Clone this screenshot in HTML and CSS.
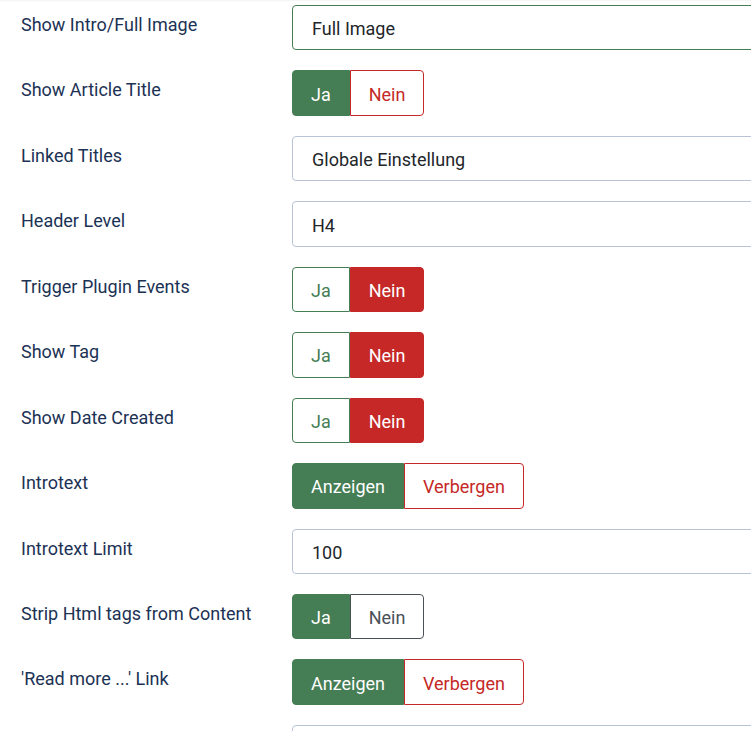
FILE: index.html
```html
<!DOCTYPE html>
<html lang="de">
<head>
  <meta charset="UTF-8">
  <meta name="viewport" content="width=device-width, initial-scale=1.0">
  <title>Article Options</title>
  <link rel="stylesheet" href="styles.css">
</head>
<body>
  <div class="options">
    <div class="row">
      <label class="label">Show Intro/Full Image</label>
      <div class="field valid">Full Image</div>
    </div>
    <div class="row">
      <label class="label">Show Article Title</label>
      <div class="switch">
        <span class="opt on-green">Ja</span>
        <span class="opt off-red">Nein</span>
      </div>
    </div>
    <div class="row">
      <label class="label">Linked Titles</label>
      <div class="field">Globale Einstellung</div>
    </div>
    <div class="row">
      <label class="label">Header Level</label>
      <div class="field">H4</div>
    </div>
    <div class="row">
      <label class="label">Trigger Plugin Events</label>
      <div class="switch">
        <span class="opt off-green">Ja</span>
        <span class="opt on-red">Nein</span>
      </div>
    </div>
    <div class="row">
      <label class="label">Show Tag</label>
      <div class="switch">
        <span class="opt off-green">Ja</span>
        <span class="opt on-red">Nein</span>
      </div>
    </div>
    <div class="row">
      <label class="label">Show Date Created</label>
      <div class="switch">
        <span class="opt off-green">Ja</span>
        <span class="opt on-red">Nein</span>
      </div>
    </div>
    <div class="row">
      <label class="label">Introtext</label>
      <div class="switch">
        <span class="opt on-green">Anzeigen</span>
        <span class="opt off-red">Verbergen</span>
      </div>
    </div>
    <div class="row">
      <label class="label">Introtext Limit</label>
      <div class="field">100</div>
    </div>
    <div class="row">
      <label class="label">Strip Html tags from Content</label>
      <div class="switch">
        <span class="opt on-green">Ja</span>
        <span class="opt off-gray">Nein</span>
      </div>
    </div>
    <div class="row">
      <label class="label">'Read more ...' Link</label>
      <div class="switch">
        <span class="opt on-green">Anzeigen</span>
        <span class="opt off-red">Verbergen</span>
      </div>
    </div>
    <div class="row">
      <label class="label"></label>
      <div class="field"></div>
    </div>
  </div>
</body>
</html>
```

FILE: styles.css
```css
/* Page */
body {
  margin: 0;
  background-color: #fff;
  font-family: Roboto, "Liberation Sans", sans-serif;
  font-size: 18px;
  overflow: hidden;
  box-shadow: inset 0 2px 2px -1px rgba(0, 0, 0, 0.05);
  height: 731px;
}
.options {
  display: flex;
  flex-direction: column;
  gap: 20px;
  padding-top: 5px;
}
.row {
  display: flex;
  align-items: flex-start;
}
.label {
  width: 271px;
  flex-shrink: 0;
  padding-left: 21px;
  padding-top: 6px;
  line-height: 27px;
  color: #1c3254;
}

/* Text fields */
.field {
  flex: 1;
  box-sizing: border-box;
  height: 45.45px;
  margin-right: -20px;
  padding: 2px 19px 0;
  display: flex;
  align-items: center;
  border: 1px solid #b8c4d6;
  border-radius: 4px;
  color: #22262a;
}
.field.valid {
  border-color: #457d54;
}

/* Switcher buttons */
.switch {
  display: flex;
  height: 45.45px;
}
.opt {
  display: flex;
  align-items: center;
  box-sizing: border-box;
  padding: 2px 18px 0;
  border: 1px solid;
}
.opt:first-child {
  border-radius: 4px 0 0 4px;
}
.opt:last-child {
  border-radius: 0 4px 4px 0;
}
.on-green {
  background-color: #457d54;
  border-color: #457d54;
  color: #fff;
}
.on-red {
  background-color: #c52827;
  border-color: #c52827;
  color: #fff;
}
.off-red {
  border-color: #c52827;
  color: #c52827;
}
.off-green {
  border-color: #457d54;
  color: #457d54;
}
.off-gray {
  border-color: #495057;
  color: #495057;
}
```
